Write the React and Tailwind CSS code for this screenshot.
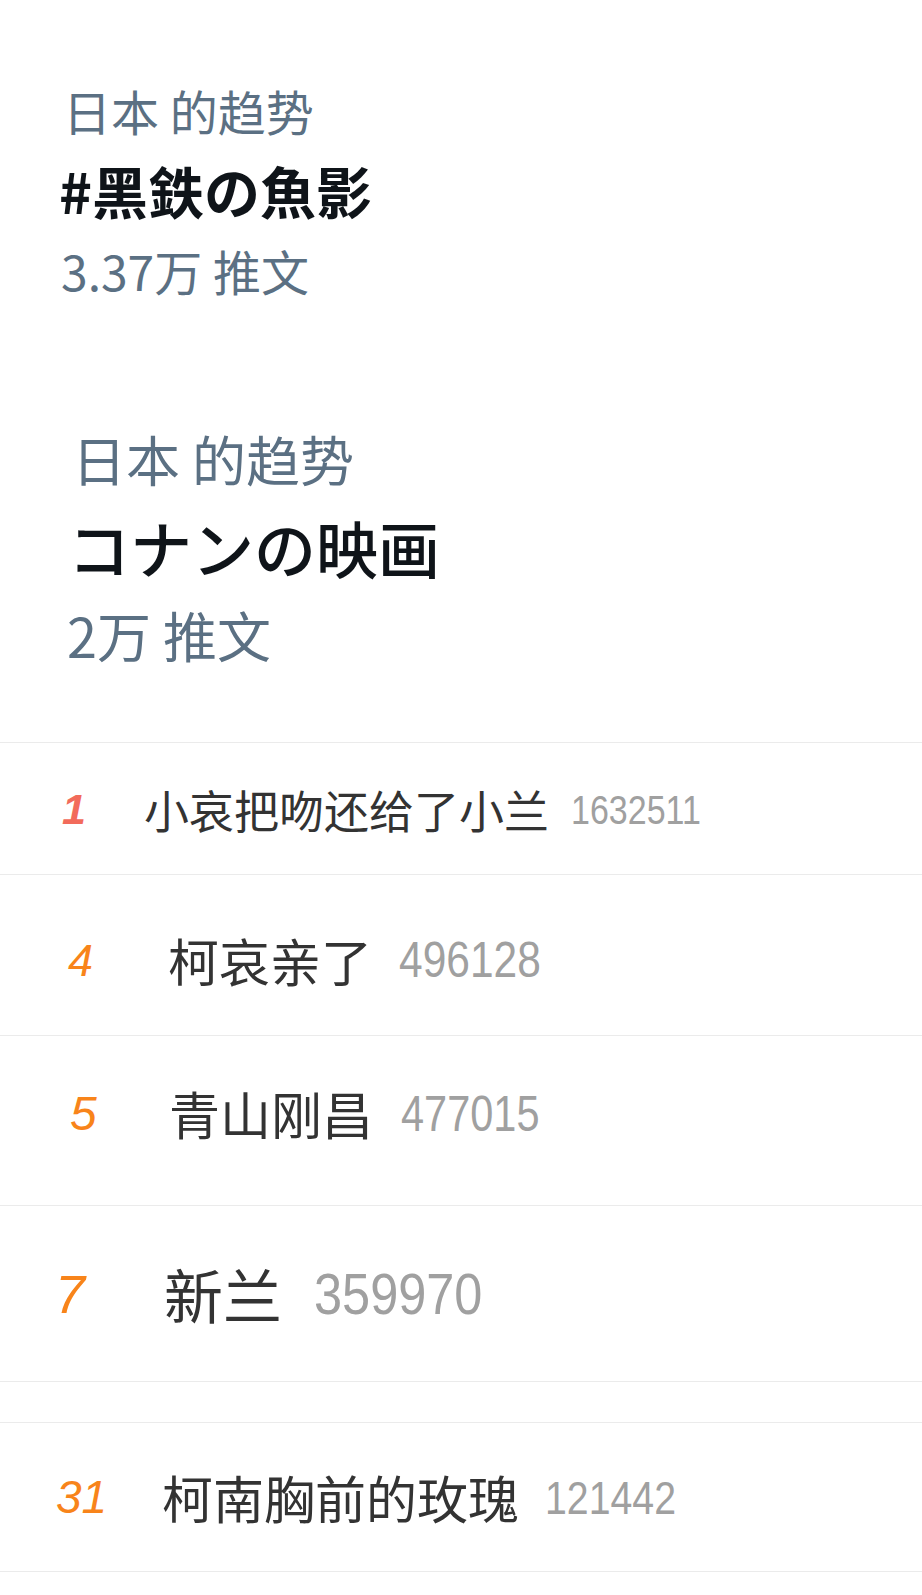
import React from 'react';

const cjk = "font-['Noto_Sans_CJK_SC','Noto_Sans_CJK_JP',sans-serif]";
const latin = "font-['Liberation_Sans',sans-serif]";

const rows = [
  {
    rank: '1',
    text: '小哀把吻还给了小兰',
    count: '1632511',
    row: 'h-[132px] pt-[2px]',
    rankCls: 'w-[144px] pl-[62px] text-[43px] font-bold text-[#f26b5b]',
    textCls: 'text-[45px]',
    countCls: 'ml-[22px] text-[40px] scale-x-[0.85]',
  },
  {
    rank: '4',
    text: '柯哀亲了',
    count: '496128',
    row: 'h-[161px] pt-[10px]',
    rankCls: 'w-[168px] pl-[68px] text-[45px] text-[#f8841a]',
    textCls: 'text-[51px]',
    countCls: 'ml-[27px] text-[50px] scale-x-[0.85]',
  },
  {
    rank: '5',
    text: '青山刚昌',
    count: '477015',
    row: 'h-[170px] pb-[14px]',
    rankCls: 'w-[169px] pl-[70px] text-[48px] text-[#f8841a]',
    textCls: 'text-[51px]',
    countCls: 'ml-[28px] text-[50px] scale-x-[0.83]',
  },
  {
    rank: '7',
    text: '新兰',
    count: '359970',
    row: 'h-[176px]',
    rankCls: 'w-[164px] pl-[55px] text-[54px] text-[#f8841a]',
    textCls: 'text-[59px]',
    countCls: 'ml-[32px] text-[58px] scale-x-[0.87]',
  },
];

const lastRow = {
  rank: '31',
  text: '柯南胸前的玫瑰',
  count: '121442',
  row: 'h-[149px]',
  rankCls: 'w-[162px] pl-[56px] text-[46px] text-[#f8841a]',
  textCls: 'text-[51px]',
  countCls: 'ml-[26px] text-[47px] scale-x-[0.835]',
};

const HotRow = ({ item }) => (
  <div className={`flex items-center border-b border-[#ebebeb] ${item.row}`}>
    <span className={`shrink-0 italic leading-none ${latin} ${item.rankCls}`}>{item.rank}</span>
    <span className={`leading-none text-[#333333] ${cjk} ${item.textCls}`}>{item.text}</span>
    <span className={`inline-block origin-left leading-none text-[#a0a0a0] ${latin} ${item.countCls}`}>
      {item.count}
    </span>
  </div>
);

const Trend = ({ pad, sub, title, count, subSize, titleSize, countSize, lh }) => (
  <div className={`${pad} ${cjk}`}>
    <div className={`${subSize} ${lh} text-[#5b7083]`}>{sub}</div>
    <div className={`${titleSize} ${lh} text-[#0f1419]`}>{title}</div>
    <div className={`${countSize} ${lh} text-[#5b7083]`}>{count}</div>
  </div>
);

export default function App() {
  return (
    <div className="w-[922px] h-[1595px] overflow-hidden bg-white">
      <Trend
        pad="pt-[70px] pl-[62px]"
        sub="日本 的趋势"
        title="#黑鉄の魚影"
        count="3.37万 推文"
        subSize="text-[48px] pl-[1px]"
        titleSize="text-[56px] font-bold -ml-[3px]"
        countSize="text-[48px] -ml-[1px]"
        lh="leading-[80px]"
      />
      <Trend
        pad="pt-[105px] pl-[70px]"
        sub="日本 的趋势"
        title="コナンの映画"
        count="2万 推文"
        subSize="text-[54px] pl-[2px]"
        titleSize="text-[62px] font-medium -ml-[2px]"
        countSize="text-[54px] -ml-[3px]"
        lh="leading-[88px]"
      />

      <div className="mt-[63px] border-t border-[#ebebeb]">
        {rows.map((item) => (
          <HotRow key={item.rank} item={item} />
        ))}
        <div className="h-[41px] border-b border-[#ebebeb]" />
        <HotRow item={lastRow} />
      </div>
    </div>
  );
}
